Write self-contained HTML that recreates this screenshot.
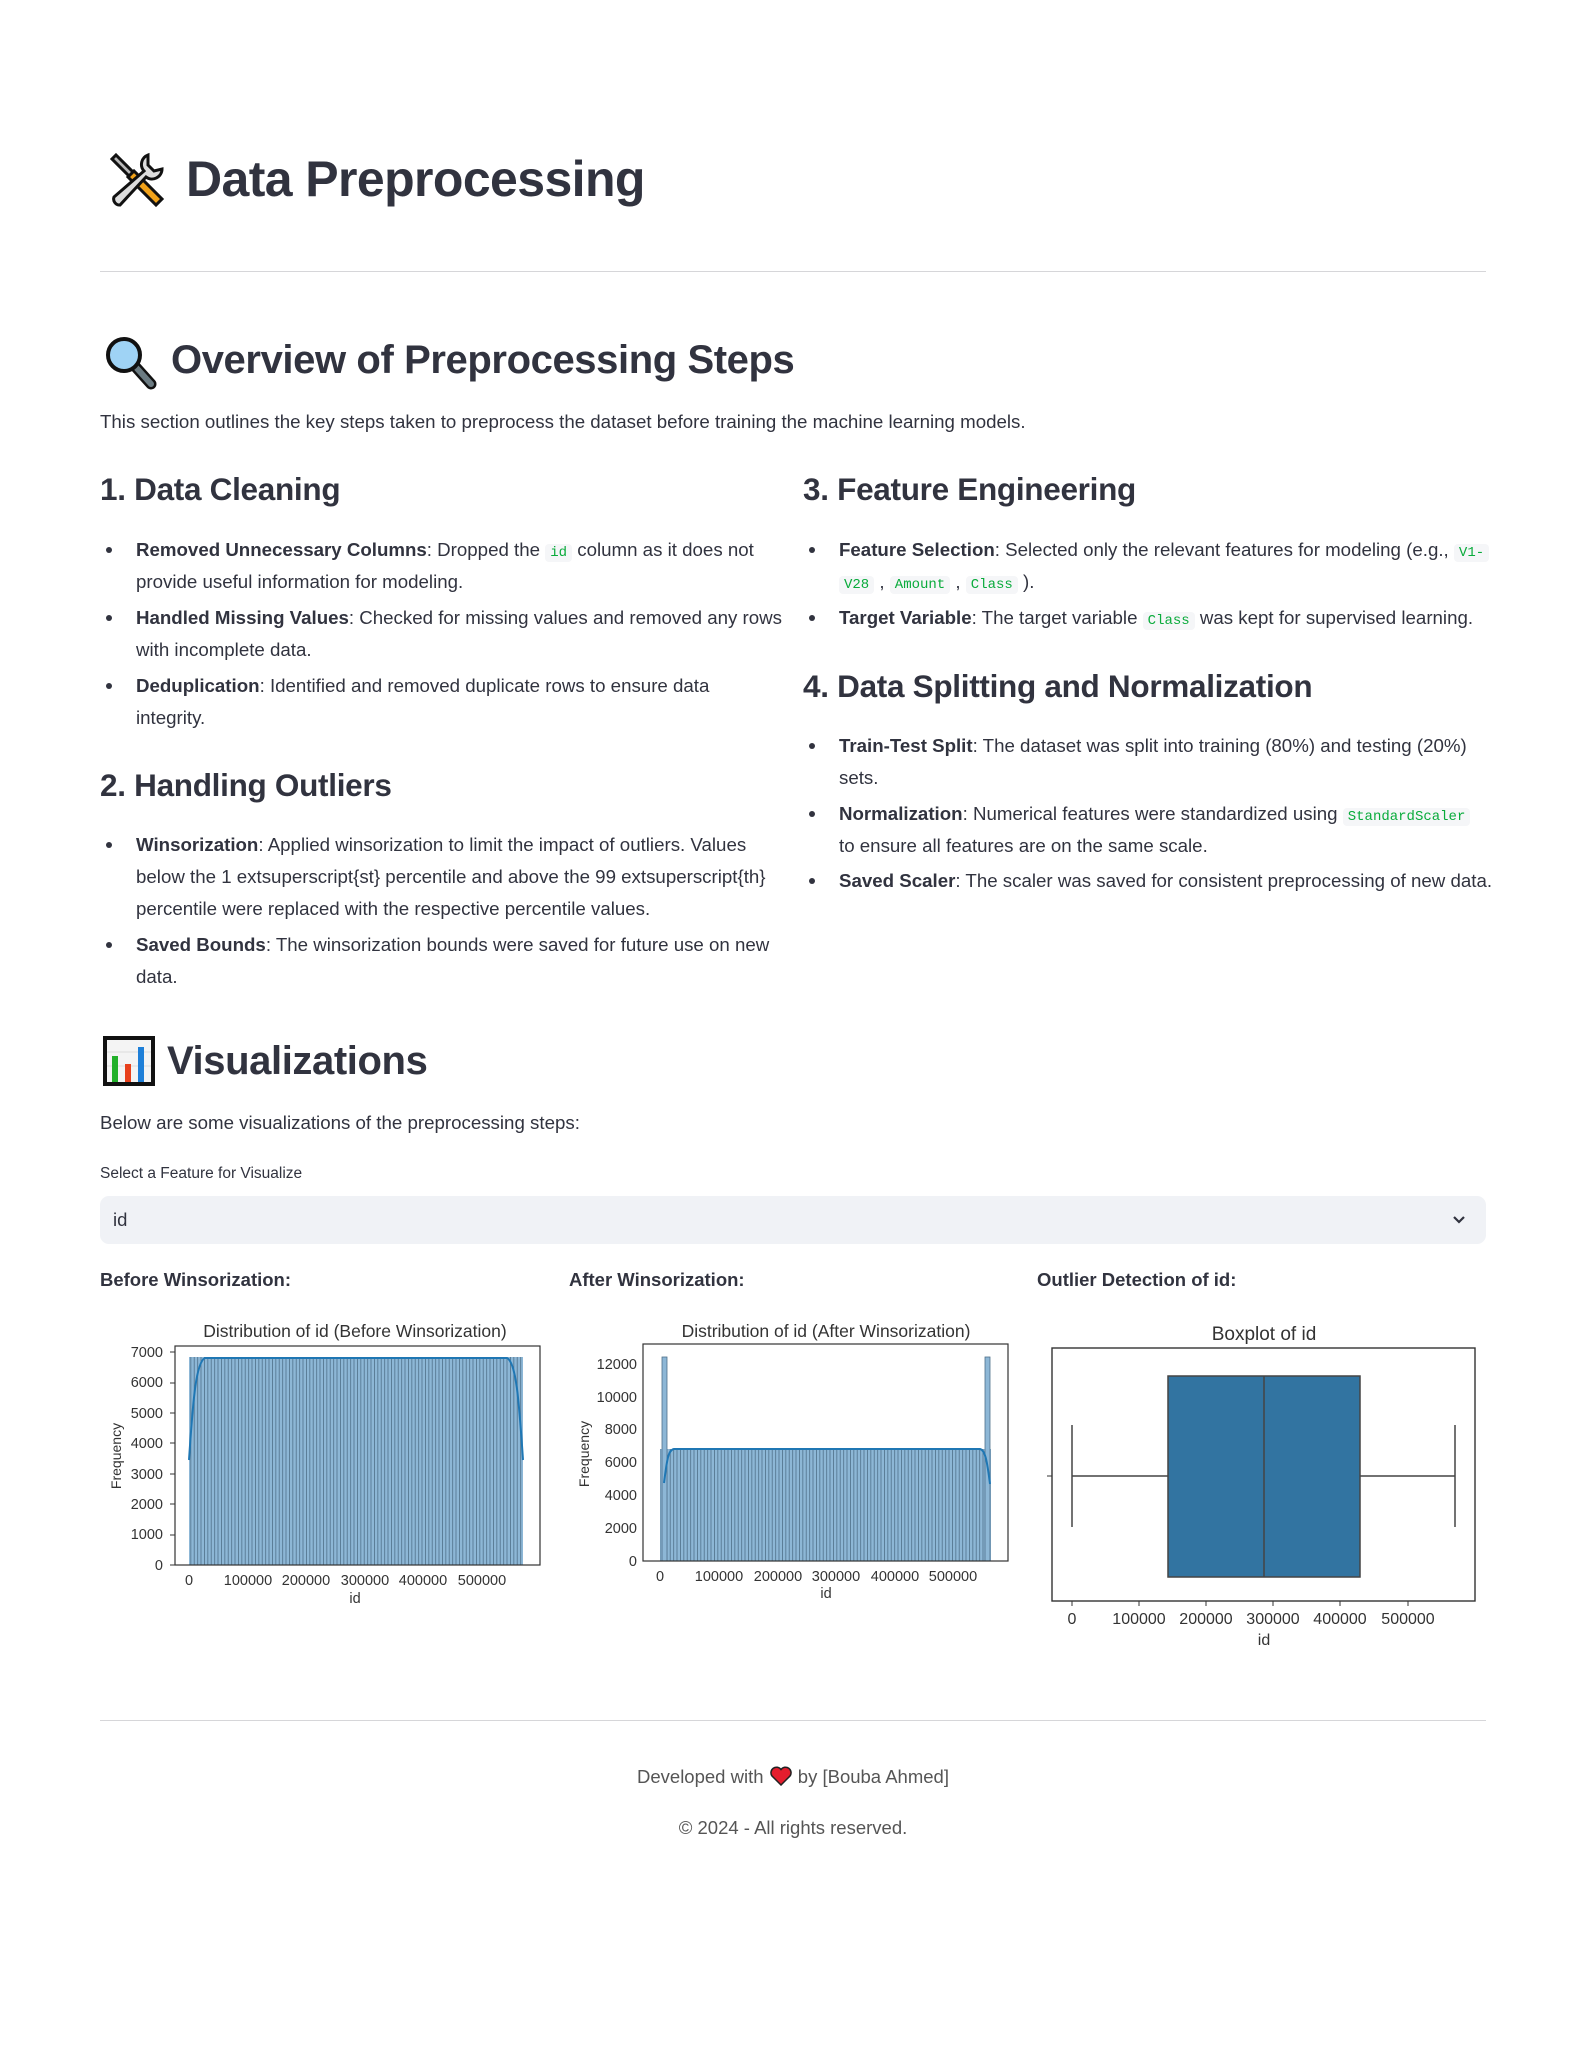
<!DOCTYPE html>
<html><head><meta charset="utf-8"><style>
*{margin:0;padding:0;box-sizing:border-box}
body{width:1586px;height:2045px;background:#fff;font-family:"Liberation Sans",sans-serif;color:#31333F;position:relative;overflow:hidden}
.a{position:absolute;white-space:nowrap}
.h1{font-size:50px;font-weight:bold;letter-spacing:-0.6px;line-height:60px}
.h2{font-size:40px;font-weight:bold;letter-spacing:-0.4px;line-height:50px}
.h3{font-size:31.5px;font-weight:bold;letter-spacing:-0.3px;line-height:40px}
.p{font-size:18.7px;line-height:32px}
.li{font-size:18.7px;line-height:32px;padding-left:36px}
.li:before{content:"";position:absolute;left:6px;top:13px;width:6px;height:6px;border-radius:50%;background:#31333F}
code{font-family:"Liberation Mono",monospace;font-size:14px;line-height:14px;color:#09ab3b;background:#f5f6f8;padding:2px 5px;border-radius:4px;display:inline-block}
.hr{position:absolute;left:100px;width:1386px;height:1px;background:#d6d6d9}
.lbl{font-size:18.5px;font-weight:bold;line-height:32px}
svg text{font-family:"Liberation Sans",sans-serif;fill:#333}
</style></head><body>

<svg class="a" style="left:104px;top:147px" width="64" height="64" viewBox="0 0 64 64">
<path d="M12 8 L30 26 L26 30 L8 12 Z" fill="#b8b8b8" stroke="#111" stroke-width="3"/>
<path d="M24 30 L52 58 L58 52 L30 24 Z" fill="#f1a21a" stroke="#111" stroke-width="3"/>
<path d="M44 8 A10 10 0 0 0 40 24 L10 50 A6 6 0 0 0 16 58 L42 30 A10 10 0 0 0 58 22 L50 24 L44 18 Z" fill="#ddd" stroke="#111" stroke-width="3"/>
</svg>
<div class="a h1" style="left:186px;top:149px">Data Preprocessing</div>
<div class="hr" style="top:271px"></div>

<svg class="a" style="left:103px;top:334px" width="56" height="56" viewBox="0 0 56 56">
<line x1="30" y1="30" x2="48" y2="50" stroke="#111" stroke-width="11" stroke-linecap="round"/>
<line x1="30" y1="30" x2="48" y2="50" stroke="#6b7b82" stroke-width="6" stroke-linecap="round"/>
<circle cx="21" cy="21" r="16" fill="#9fd3f5" stroke="#111" stroke-width="4"/>
</svg>
<div class="a h2" style="left:171px;top:335px">Overview of Preprocessing Steps</div>
<div class="a p" style="left:100px;top:406px">This section outlines the key steps taken to preprocess the dataset before training the machine learning models.</div>

<div class="a h3" style="left:100px;top:469px">1. Data Cleaning</div>
<div class="a li" style="left:100px;top:534px"><b>Removed Unnecessary Columns</b>: Dropped the <code>id</code> column as it does not<br>provide useful information for modeling.</div>
<div class="a li" style="left:100px;top:602px"><b>Handled Missing Values</b>: Checked for missing values and removed any rows<br>with incomplete data.</div>
<div class="a li" style="left:100px;top:670px"><b>Deduplication</b>: Identified and removed duplicate rows to ensure data<br>integrity.</div>
<div class="a h3" style="left:100px;top:765px">2. Handling Outliers</div>
<div class="a li" style="left:100px;top:829px"><b>Winsorization</b>: Applied winsorization to limit the impact of outliers. Values<br>below the 1 extsuperscript{st} percentile and above the 99 extsuperscript{th}<br>percentile were replaced with the respective percentile values.</div>
<div class="a li" style="left:100px;top:929px"><b>Saved Bounds</b>: The winsorization bounds were saved for future use on new<br>data.</div>

<div class="a h3" style="left:803px;top:469px">3. Feature Engineering</div>
<div class="a li" style="left:803px;top:534px"><b>Feature Selection</b>: Selected only the relevant features for modeling (e.g., <code>V1-</code><br><code>V28</code> , <code>Amount</code> , <code>Class</code> ).</div>
<div class="a li" style="left:803px;top:602px"><b>Target Variable</b>: The target variable <code>Class</code> was kept for supervised learning.</div>
<div class="a h3" style="left:803px;top:666px">4. Data Splitting and Normalization</div>
<div class="a li" style="left:803px;top:730px"><b>Train-Test Split</b>: The dataset was split into training (80%) and testing (20%)<br>sets.</div>
<div class="a li" style="left:803px;top:798px"><b>Normalization</b>: Numerical features were standardized using <code>StandardScaler</code><br>to ensure all features are on the same scale.</div>
<div class="a li" style="left:803px;top:865px"><b>Saved Scaler</b>: The scaler was saved for consistent preprocessing of new data.</div>

<svg class="a" style="left:103px;top:1036px" width="52" height="50" viewBox="0 0 52 50">
<rect x="2" y="2" width="48" height="46" fill="#f4f4f4" stroke="#111" stroke-width="4"/>
<line x1="4" y1="16" x2="48" y2="16" stroke="#ddd"/><line x1="4" y1="30" x2="48" y2="30" stroke="#ddd"/>
<rect x="9" y="20" width="6" height="26" fill="#22b02a"/><rect x="22" y="28" width="6" height="18" fill="#e8401c"/><rect x="35" y="11" width="6" height="35" fill="#1e7fd8"/>
</svg>
<div class="a h2" style="left:167px;top:1036px">Visualizations</div>
<div class="a p" style="left:100px;top:1107px">Below are some visualizations of the preprocessing steps:</div>
<div class="a" style="left:100px;top:1164px;font-size:15.5px;line-height:20px">Select a Feature for Visualize</div>
<div class="a" style="left:100px;top:1196px;width:1386px;height:48px;background:#f0f2f6;border-radius:9px"></div>
<div class="a" style="left:113px;top:1205px;font-size:18.5px;line-height:30px">id</div>
<svg class="a" style="left:1450px;top:1212px" width="18" height="16" viewBox="0 0 18 16"><path d="M4 5 L9 10 L14 5" fill="none" stroke="#31333F" stroke-width="2.2"/></svg>

<div class="a lbl" style="left:100px;top:1264px">Before Winsorization:</div>
<div class="a lbl" style="left:569px;top:1264px">After Winsorization:</div>
<div class="a lbl" style="left:1037px;top:1264px">Outlier Detection of id:</div>

<svg class="a" style="left:0;top:0" width="1586" height="1700" viewBox="0 0 1586 1700">
<defs>
<pattern id="st" x="0" y="0" width="3.4" height="10" patternUnits="userSpaceOnUse"><rect width="3.4" height="10" fill="#8db7d6"/><rect width="0.8" height="10" fill="#4f708a"/></pattern>
</defs>
<text x="355" y="1337" font-size="17.5" text-anchor="middle">Distribution of id (Before Winsorization)</text>
<rect x="189" y="1357" width="334" height="208" fill="url(#st)"/>
<path d="M189 1460 C193 1400 196 1362 205 1358 L507 1358 C516 1362 519 1400 523 1460" fill="none" stroke="#1f77b4" stroke-width="2"/>
<rect x="175" y="1346" width="365" height="219" fill="none" stroke="#333" stroke-width="1.2"/>
<g font-size="14.5" text-anchor="end">
<text x="163" y="1570">0</text><text x="163" y="1539">1000</text><text x="163" y="1509">2000</text><text x="163" y="1479">3000</text><text x="163" y="1448">4000</text><text x="163" y="1418">5000</text><text x="163" y="1387">6000</text><text x="163" y="1357">7000</text></g>
<g stroke="#333"><line x1="170" y1="1565" x2="175" y2="1565"/><line x1="170" y1="1535" x2="175" y2="1535"/><line x1="170" y1="1504" x2="175" y2="1504"/><line x1="170" y1="1474" x2="175" y2="1474"/><line x1="170" y1="1443" x2="175" y2="1443"/><line x1="170" y1="1413" x2="175" y2="1413"/><line x1="170" y1="1383" x2="175" y2="1383"/><line x1="170" y1="1352" x2="175" y2="1352"/></g>
<g font-size="14.5" text-anchor="middle"><text x="189" y="1585">0</text><text x="248" y="1585">100000</text><text x="306" y="1585">200000</text><text x="365" y="1585">300000</text><text x="423" y="1585">400000</text><text x="482" y="1585">500000</text><text x="355" y="1603">id</text></g>
<text x="121" y="1456" font-size="14" text-anchor="middle" transform="rotate(-90 121 1456)">Frequency</text>
<text x="826" y="1337" font-size="17.5" text-anchor="middle">Distribution of id (After Winsorization)</text>
<rect x="660" y="1449" width="331" height="112" fill="url(#st)"/>
<rect x="662" y="1357" width="5" height="204" fill="#8db7d6" stroke="#4f708a" stroke-width="0.8"/>
<rect x="985" y="1357" width="5" height="204" fill="#8db7d6" stroke="#4f708a" stroke-width="0.8"/>
<path d="M664 1483 C667 1460 668 1450 674 1449 L980 1449 C985 1450 987 1460 990 1484" fill="none" stroke="#1f77b4" stroke-width="2"/>
<rect x="643" y="1344" width="365" height="217" fill="none" stroke="#333" stroke-width="1.2"/>
<g font-size="14.5" text-anchor="end"><text x="637" y="1566">0</text><text x="637" y="1533">2000</text><text x="637" y="1500">4000</text><text x="637" y="1467">6000</text><text x="637" y="1434">8000</text><text x="637" y="1402">10000</text><text x="637" y="1369">12000</text></g>
<g font-size="14.5" text-anchor="middle"><text x="660" y="1581">0</text><text x="719" y="1581">100000</text><text x="778" y="1581">200000</text><text x="836" y="1581">300000</text><text x="895" y="1581">400000</text><text x="953" y="1581">500000</text><text x="826" y="1598">id</text></g>
<text x="589" y="1454" font-size="14" text-anchor="middle" transform="rotate(-90 589 1454)">Frequency</text>
<text x="1264" y="1340" font-size="19" text-anchor="middle">Boxplot of id</text>
<rect x="1052" y="1348" width="423" height="253" fill="none" stroke="#333" stroke-width="1.4"/>
<line x1="1047" y1="1476" x2="1052" y2="1476" stroke="#333"/>
<line x1="1072" y1="1476" x2="1168" y2="1476" stroke="#444" stroke-width="1.5"/>
<line x1="1360" y1="1476" x2="1455" y2="1476" stroke="#444" stroke-width="1.5"/>
<line x1="1072" y1="1425" x2="1072" y2="1527" stroke="#444" stroke-width="1.5"/>
<line x1="1455" y1="1425" x2="1455" y2="1527" stroke="#444" stroke-width="1.5"/>
<rect x="1168" y="1376" width="192" height="201" fill="#3274a1" stroke="#444" stroke-width="1.5"/>
<line x1="1264" y1="1376" x2="1264" y2="1577" stroke="#444" stroke-width="1.5"/>
<g font-size="16" text-anchor="middle"><text x="1072" y="1624">0</text><text x="1139" y="1624">100000</text><text x="1206" y="1624">200000</text><text x="1273" y="1624">300000</text><text x="1340" y="1624">400000</text><text x="1408" y="1624">500000</text><text x="1264" y="1645">id</text></g>
<g stroke="#333"><line x1="1072" y1="1601" x2="1072" y2="1606"/><line x1="1139" y1="1601" x2="1139" y2="1606"/><line x1="1206" y1="1601" x2="1206" y2="1606"/><line x1="1273" y1="1601" x2="1273" y2="1606"/><line x1="1340" y1="1601" x2="1340" y2="1606"/><line x1="1408" y1="1601" x2="1408" y2="1606"/></g>
</svg>

<div class="hr" style="top:1720px"></div>
<div class="a" style="left:0;width:1586px;top:1762px;text-align:center;font-size:18.5px;line-height:30px;color:#555">Developed with <svg width="24" height="20" viewBox="0 0 24 20" style="vertical-align:-3px"><path d="M12 19 L3 10 A5.5 5.5 0 0 1 12 3.5 A5.5 5.5 0 0 1 21 10 Z" fill="#e41d2d" stroke="#222" stroke-width="1.5"/></svg> by [Bouba Ahmed]</div>
<div class="a" style="left:0;width:1586px;top:1813px;text-align:center;font-size:18.5px;line-height:30px;color:#555">© 2024 - All rights reserved.</div>
</body></html>
